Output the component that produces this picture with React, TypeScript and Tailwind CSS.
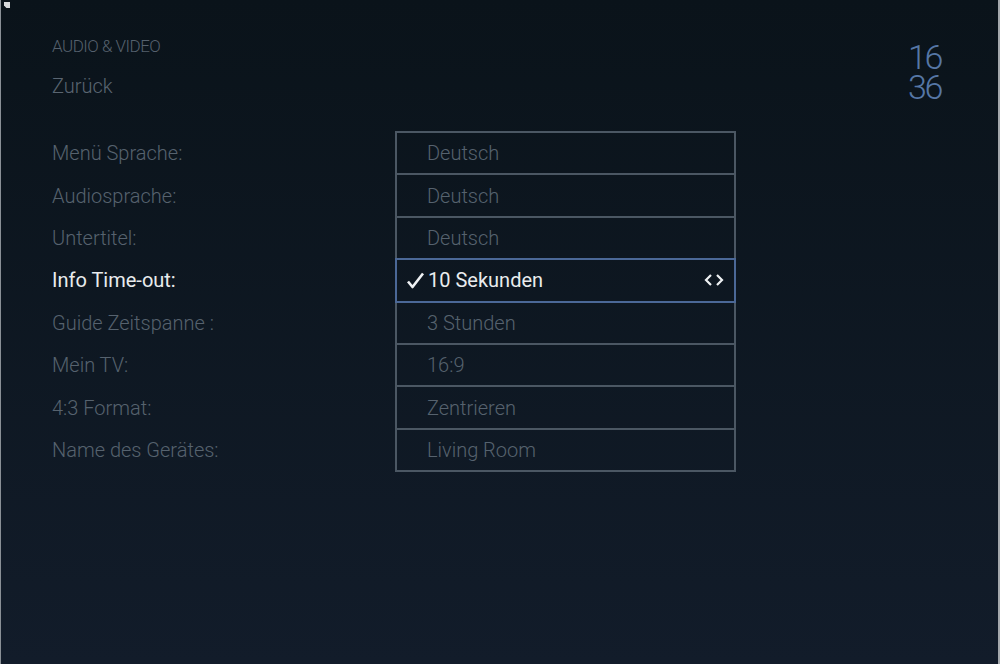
const rows = [
  { label: "Menü Sprache:", value: "Deutsch" },
  { label: "Audiosprache:", value: "Deutsch" },
  { label: "Untertitel:", value: "Deutsch" },
  { label: "Info Time-out:", value: "10 Sekunden", active: true },
  { label: "Guide Zeitspanne :", value: "3 Stunden" },
  { label: "Mein TV:", value: "16:9" },
  { label: "4:3 Format:", value: "Zentrieren" },
  { label: "Name des Gerätes:", value: "Living Room" },
];

export default function App() {
  return (
    <div className="relative h-[664px] w-[1000px] overflow-hidden border-l border-r-2 border-l-[#8a9096] border-r-[#a4a8ac] bg-gradient-to-b from-[#0a131a] to-[#121c2a] font-['Roboto',sans-serif]">
      <span className="absolute left-[3px] top-[2px] h-[6px] w-[6px] bg-[#d8dadc] [clip-path:polygon(0_0,100%_0,100%_100%,40%_100%,0_60%)]" />

      <header className="flex justify-between pl-[51px] pr-[57px] pt-[36px]">
        <div>
          <p className="text-[17px] leading-[20px] tracking-[-0.03em] font-light text-[#56616d]">
            AUDIO &amp; VIDEO
          </p>
          <p className="mt-[18px] text-[20px] leading-[24px] font-light text-[#5a6571]">
            Zurück
          </p>
        </div>
        <div className="flex flex-col gap-[1px] pt-[7px] text-[34px] leading-[29px] font-light text-[#5677a6] tracking-[-0.07em]">
          <span>16</span>
          <span>36</span>
        </div>
      </header>

      <section className="mt-[29px] pl-[51px]">
        {rows.map((r, i) => (
          <div
            key={r.label}
            className={`flex items-stretch ${i > 0 ? "-mt-[2px]" : ""}`}
          >
            <div
              className={`flex w-[343px] items-center text-[20px] ${
                r.active ? "text-[#e9ecee]" : "font-light text-[#56626e]"
              }`}
            >
              {r.label}
            </div>
            <div
              className={`relative flex h-[44.4px] w-[341px] items-center border-2 text-[20px] ${
                r.active
                  ? "z-10 border-[#4b6897] text-[#e9ecee]"
                  : "border-[#4b5763] font-light text-[#56626e]"
              }`}
            >
              {r.active ? (
                <>
                  <svg
                    className="ml-[9px] mr-[3px]"
                    width="19"
                    height="19"
                    viewBox="0 0 19 19"
                    fill="none"
                  >
                    <path
                      d="M2 10.5 L6.5 16 L17 2.5"
                      stroke="#eef1f3"
                      strokeWidth="2.6"
                      strokeLinejoin="round"
                    />
                  </svg>
                  <span className="flex-1">{r.value}</span>
                  <svg
                    className="mr-[10px]"
                    width="20"
                    height="14"
                    viewBox="0 0 20 14"
                    fill="none"
                  >
                    <path
                      d="M7 2 L2 7 L7 12 M13 2 L18 7 L13 12"
                      stroke="#eef1f3"
                      strokeWidth="2.2"
                    />
                  </svg>
                </>
              ) : (
                <span className="pl-[30px]">{r.value}</span>
              )}
            </div>
          </div>
        ))}
      </section>
    </div>
  );
}
